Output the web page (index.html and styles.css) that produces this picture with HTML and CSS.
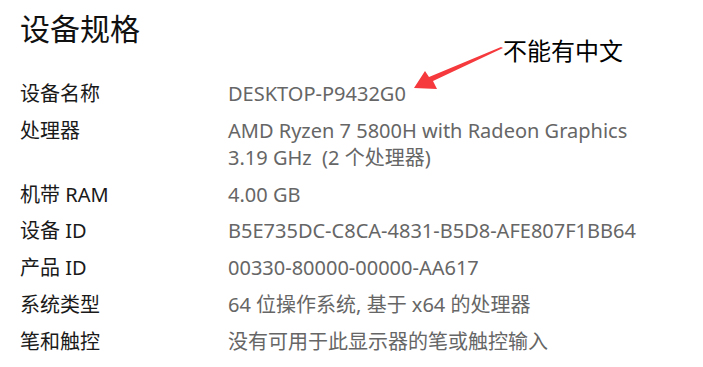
FILE: index.html
```html
<!DOCTYPE html>
<html lang="zh-CN">
<head>
<meta charset="utf-8">
<title>设备规格</title>
<link rel="stylesheet" href="styles.css">
</head>
<body>
<main class="page">
  <h1 class="title">设备规格</h1>
  <dl class="specs">
    <dt>设备名称</dt><dd>DESKTOP-P9432G0</dd>
    <dt>处理器</dt><dd>AMD Ryzen 7 5800H with Radeon Graphics<br>3.19 GHz&nbsp;&nbsp;(2 个处理器)</dd>
    <dt>机带 RAM</dt><dd>4.00 GB</dd>
    <dt>设备 ID</dt><dd>B5E735DC-C8CA-4831-B5D8-AFE807F1BB64</dd>
    <dt>产品 ID</dt><dd>00330-80000-00000-AA617</dd>
    <dt>系统类型</dt><dd>64 位操作系统, 基于 x64 的处理器</dd>
    <dt>笔和触控</dt><dd>没有可用于此显示器的笔或触控输入</dd>
  </dl>
  <div class="note">不能有中文</div>
  <svg class="arrow" width="703" height="367" viewBox="0 0 703 367">
    <polygon points="503,48 433,81 437,89 414,88 425,71 429,77 501,47" fill="#f5393c"/>
  </svg>
</main>
</body>
</html>
```
FILE: styles.css
```css
html, body {
  margin: 0;
  padding: 0;
  background: #ffffff;
}
body {
  font-family: "Noto Sans", "Noto Sans CJK SC", sans-serif;
  width: 703px;
  height: 367px;
  overflow: hidden;
}
.page {
  position: relative;
  padding: 6px 0 0 20px;
}
.title {
  margin: 0;
  font-family: "Noto Sans CJK SC", sans-serif;
  font-weight: 400;
  font-size: 30px;
  line-height: 42px;
  color: #111;
}
.specs {
  display: grid;
  grid-template-columns: 208px auto;
  row-gap: 9.8px;
  margin: 32px 0 0 0;
  font-size: 20px;
  line-height: 27px;
}
.specs dt {
  color: #1a1a1a;
}
.specs dd {
  margin: 0;
  color: #666;
}
.note {
  position: absolute;
  left: 503px;
  top: 34px;
  font-family: "Noto Sans CJK SC", sans-serif;
  font-size: 24px;
  line-height: 32px;
  color: #000;
}
.arrow {
  position: absolute;
  left: 0;
  top: 0;
  pointer-events: none;
}
```
